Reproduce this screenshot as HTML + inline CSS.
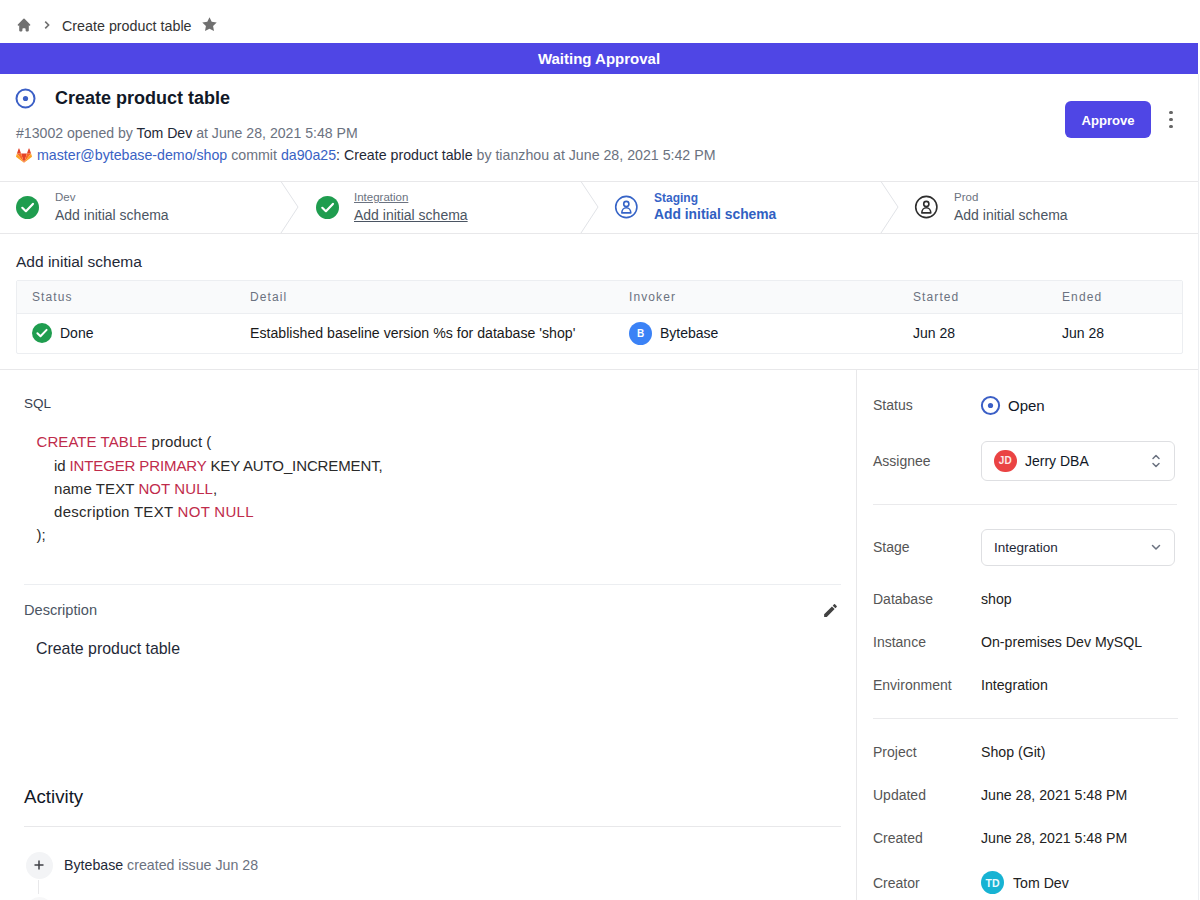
<!DOCTYPE html>
<html><head><meta charset="utf-8">
<style>
*{box-sizing:border-box;margin:0;padding:0}
html,body{width:1200px;height:900px;overflow:hidden;background:#fff}
body{position:relative;font-family:"Liberation Sans",sans-serif;color:#1f2937}
.t{position:absolute;line-height:1;white-space:nowrap}
.abs{position:absolute}
.hl{position:absolute;height:1px;background:#e8e8ea}
.vl{position:absolute;width:1px;background:#e8e8ea}
.b{font-weight:bold}
.g{color:#6b7280}
.lbl{font-size:14px;color:#555}
.val{font-size:14.15px;color:#222}
.th{font-size:12px;color:#6b7280;letter-spacing:1.1px}
.red{color:#bf2b4b}
</style></head>
<body>

<!-- breadcrumb -->
<svg class="abs" style="left:16px;top:17px" width="16" height="16" viewBox="0 0 20 20"><path fill="#707070" d="M10.7 2.3a1 1 0 0 0-1.4 0l-7 7a1 1 0 0 0 1.4 1.4l.3-.3V17a1 1 0 0 0 1 1h2a1 1 0 0 0 1-1v-2a1 1 0 0 1 1-1h2a1 1 0 0 1 1 1v2a1 1 0 0 0 1 1h2a1 1 0 0 0 1-1v-6.6l.3.3a1 1 0 0 0 1.4-1.4l-7-7z"/></svg>
<svg class="abs" style="left:41.5px;top:19px" width="10" height="12" viewBox="0 0 10 12"><path d="M3.2 2.6l3.4 3.4-3.4 3.4" fill="none" stroke="#707070" stroke-width="1.6"/></svg>
<div class="t" style="left:62px;top:calc(31px - 0.8465em);font-size:14.3px;color:#333">Create product table</div>
<svg class="abs" style="left:201px;top:16px" width="17" height="17" viewBox="0 0 20 20"><path fill="#707070" d="M10 1.5l2.6 5.4 5.9.8-4.3 4.1 1.1 5.9L10 14.9l-5.3 2.8 1.1-5.9L1.5 7.7l5.9-.8z"/></svg>

<!-- banner -->
<div class="abs" style="left:0;top:43px;width:1198px;height:31px;background:#4f46e5"></div>
<div class="t b" style="left:0;width:1198px;text-align:center;top:calc(64px - 0.8465em);font-size:15px;color:#fff">Waiting Approval</div>
<div class="vl" style="left:1198px;top:74px;height:826px;background:#eceef1"></div>

<!-- title -->
<svg class="abs" style="left:15px;top:88px" width="21" height="21" viewBox="0 0 21 21"><circle cx="10.5" cy="10.5" r="9" fill="none" stroke="#3b5fc6" stroke-width="2"/><circle cx="10.5" cy="10.5" r="2.6" fill="#3b5fc6"/></svg>
<div class="t b" style="left:55px;top:calc(104px - 0.8465em);font-size:18px;color:#111827">Create product table</div>
<div class="t g" style="left:16px;top:calc(137.5px - 0.8465em);font-size:14.12px"><span>#13002 opened by </span><span style="color:#1f2937">Tom Dev</span> at June 28, 2021 5:48 PM</div>
<svg class="abs" style="left:15.5px;top:148px" width="16" height="15.5" viewBox="0 0 24 22"><path fill="#e24329" d="M12 21.6l4.4-13.8H7.6z"/><path fill="#fc6d26" d="M12 21.6L7.6 7.8H1.4z"/><path fill="#fca326" d="M1.4 7.8L.1 11.9a.9.9 0 0 0 .3 1L12 21.6z"/><path fill="#e24329" d="M1.4 7.8h6.2L4.9.3a.5.5 0 0 0-.9 0z"/><path fill="#fc6d26" d="M12 21.6l4.4-13.8h6.2z"/><path fill="#fca326" d="M22.6 7.8l1.3 4.1a.9.9 0 0 1-.3 1L12 21.6z"/><path fill="#e24329" d="M22.6 7.8h-6.2L19.1.3a.5.5 0 0 1 .9 0z"/></svg>
<div class="t g" style="left:37px;top:calc(160.5px - 0.8465em);font-size:14.2px"><span style="color:#3962c4">master@bytebase-demo/shop</span> commit <span style="color:#3962c4">da90a25</span><span style="color:#1f2937">: Create product table</span> by tianzhou at June 28, 2021 5:42 PM</div>

<!-- approve -->
<div class="abs" style="left:1065px;top:101px;width:86px;height:37px;background:#4f46e5;border-radius:6px"></div>
<div class="t b" style="left:1065px;width:86px;text-align:center;top:calc(125px - 0.8465em);font-size:13.1px;color:#fff">Approve</div>
<div class="abs" style="left:1169px;top:110.5px;width:3.8px;height:3.8px;border-radius:2px;background:#666"></div>
<div class="abs" style="left:1169px;top:117.5px;width:3.8px;height:3.8px;border-radius:2px;background:#666"></div>
<div class="abs" style="left:1169px;top:124.5px;width:3.8px;height:3.8px;border-radius:2px;background:#666"></div>

<!-- stepper -->
<div class="hl" style="left:0;top:181px;width:1198px"></div>
<div class="hl" style="left:0;top:233px;width:1198px"></div>
<svg class="abs" style="left:0;top:181px" width="1198" height="53"><g fill="none" stroke="#e1e3e7" stroke-width="1"><path d="M281 0.5L298 26L281 52"/><path d="M581 0.5L598 26L581 52"/><path d="M881 0.5L898 26L881 52"/></g></svg>

<svg class="abs" style="left:16px;top:196px" width="23" height="23" viewBox="0 0 23 23"><circle cx="11.5" cy="11.5" r="11.5" fill="#1f9d4f"/><path d="M6.3 11.8l3.6 3.4 7-7.3" fill="none" stroke="#fff" stroke-width="2.2" stroke-linecap="round" stroke-linejoin="round"/></svg>
<div class="t" style="left:55px;top:calc(202px - 0.8465em);font-size:11.5px;color:#6b7280">Dev</div>
<div class="t" style="left:55px;top:calc(220px - 0.8465em);font-size:14px;color:#4b5563">Add initial schema</div>

<svg class="abs" style="left:316px;top:196px" width="23" height="23" viewBox="0 0 23 23"><circle cx="11.5" cy="11.5" r="11.5" fill="#1f9d4f"/><path d="M6.3 11.8l3.6 3.4 7-7.3" fill="none" stroke="#fff" stroke-width="2.2" stroke-linecap="round" stroke-linejoin="round"/></svg>
<div class="t" style="left:354px;top:calc(202px - 0.8465em);font-size:11.5px;color:#6b7280;text-decoration:underline">Integration</div>
<div class="t" style="left:354px;top:calc(220px - 0.8465em);font-size:14px;color:#4b5563;text-decoration:underline">Add initial schema</div>

<svg class="abs" style="left:614px;top:195px" width="25" height="25" viewBox="0 0 25 25"><g fill="none" stroke="#3664c7" stroke-width="1.6"><circle cx="12.3" cy="12" r="10.6"/><circle cx="12.3" cy="9" r="2.6"/><path d="M7.8 17.9a4.5 5.1 0 0 1 9 0z" stroke-linejoin="round"/></g></svg>
<div class="t b" style="left:654px;top:calc(202px - 0.8465em);font-size:12px;color:#3664c7">Staging</div>
<div class="t b" style="left:654px;top:calc(220px - 0.8465em);font-size:13.85px;color:#3060c2">Add initial schema</div>

<svg class="abs" style="left:914px;top:195px" width="25" height="25" viewBox="0 0 25 25"><g fill="none" stroke="#2e2e2e" stroke-width="1.6"><circle cx="12.3" cy="12" r="10.6"/><circle cx="12.3" cy="9" r="2.6"/><path d="M7.8 17.9a4.5 5.1 0 0 1 9 0z" stroke-linejoin="round"/></g></svg>
<div class="t" style="left:954px;top:calc(202px - 0.8465em);font-size:11.5px;color:#6b7280">Prod</div>
<div class="t" style="left:954px;top:calc(220px - 0.8465em);font-size:14px;color:#4b5563">Add initial schema</div>

<!-- task table -->
<div class="t" style="left:16px;top:calc(266.7px - 0.8465em);font-size:15.5px;color:#1f2937">Add initial schema</div>
<div class="abs" style="left:16px;top:280px;width:1167px;height:74px;border:1px solid #eceef1;border-radius:2px"></div>
<div class="abs" style="left:17px;top:281px;width:1165px;height:32px;background:#f9fafb"></div>
<div class="hl" style="left:17px;top:313px;width:1165px;background:#eceef1"></div>
<div class="t th" style="left:32px;top:calc(300.7px - 0.8465em)">Status</div>
<div class="t th" style="left:250px;top:calc(300.7px - 0.8465em)">Detail</div>
<div class="t th" style="left:629px;top:calc(300.7px - 0.8465em)">Invoker</div>
<div class="t th" style="left:913px;top:calc(300.7px - 0.8465em)">Started</div>
<div class="t th" style="left:1062px;top:calc(300.7px - 0.8465em)">Ended</div>

<svg class="abs" style="left:32px;top:323px" width="20" height="20" viewBox="0 0 20 20"><circle cx="10" cy="10" r="10" fill="#1f9d4f"/><path d="M5.4 10.3l3.1 3 6.1-6.4" fill="none" stroke="#fff" stroke-width="2" stroke-linecap="round" stroke-linejoin="round"/></svg>
<div class="t" style="left:60px;top:calc(338px - 0.8465em);font-size:14px;color:#111827">Done</div>
<div class="t" style="left:250px;top:calc(338px - 0.8465em);font-size:14.15px;color:#1a1a1a">Established baseline version %s for database 'shop'</div>
<div class="abs" style="left:629px;top:322px;width:23px;height:23px;border-radius:50%;background:#3b82f6"></div>
<div class="t b" style="left:629px;width:23px;text-align:center;top:calc(337px - 0.8465em);font-size:10px;color:#fff">B</div>
<div class="t" style="left:660px;top:calc(338px - 0.8465em);font-size:14px;color:#111827">Bytebase</div>
<div class="t" style="left:913px;top:calc(338px - 0.8465em);font-size:14px;color:#111827">Jun 28</div>
<div class="t" style="left:1062px;top:calc(338px - 0.8465em);font-size:14px;color:#111827">Jun 28</div>

<div class="hl" style="left:0;top:369px;width:1198px"></div>

<!-- main left -->
<div class="t" style="left:24px;top:calc(408.3px - 0.8465em);font-size:13.5px;color:#374151">SQL</div>
<div class="t" style="left:36.5px;top:calc(446.9px - 0.8465em);font-size:15px;letter-spacing:0.07px;color:#2a2a2a"><span class="red">CREATE TABLE</span> product (</div>
<div class="t" style="left:54px;top:calc(470.2px - 0.8465em);font-size:15px;letter-spacing:-0.12px;color:#2a2a2a">id <span class="red">INTEGER PRIMARY</span> KEY AUTO_INCREMENT,</div>
<div class="t" style="left:54px;top:calc(493.5px - 0.8465em);font-size:15px;letter-spacing:0.08px;color:#2a2a2a">name TEXT <span class="red">NOT NULL</span>,</div>
<div class="t" style="left:54px;top:calc(516.7px - 0.8465em);font-size:15px;letter-spacing:0.29px;color:#2a2a2a">description TEXT <span class="red">NOT NULL</span></div>
<div class="t" style="left:36.5px;top:calc(539.5px - 0.8465em);font-size:15px;color:#2a2a2a">);</div>

<div class="hl" style="left:24px;top:584px;width:817px;background:#eceef1"></div>
<div class="t" style="left:24px;top:calc(615.8px - 0.8465em);font-size:14.6px;color:#4b5563">Description</div>
<svg class="abs" style="left:822px;top:602px" width="17" height="17" viewBox="0 0 24 24"><path fill="#424242" d="M3 17.25V21h3.75L17.81 9.94l-3.75-3.75L3 17.25zM20.71 7.04a1 1 0 0 0 0-1.41l-2.34-2.34a1 1 0 0 0-1.41 0l-1.83 1.83 3.75 3.75 1.83-1.83z"/></svg>
<div class="t" style="left:36px;top:calc(654.5px - 0.8465em);font-size:15.9px;color:#1f2937">Create product table</div>

<div class="t" style="left:24px;top:calc(803.4px - 0.8465em);font-size:18.7px;color:#111827">Activity</div>
<div class="hl" style="left:24px;top:826px;width:817px"></div>
<div class="abs" style="left:25.5px;top:851.5px;width:27px;height:27px;border-radius:50%;background:#f3f4f6"></div>
<div class="abs" style="left:25.5px;top:897px;width:27px;height:27px;border-radius:50%;background:#f7f7f8"></div>
<svg class="abs" style="left:33px;top:859px" width="12" height="12" viewBox="0 0 12 12"><path d="M6 1.5v9M1.5 6h9" stroke="#3f3f46" stroke-width="1.5"/></svg>
<div class="vl" style="left:38px;top:880px;height:14px"></div>
<div class="t" style="left:64px;top:calc(870.2px - 0.8465em);font-size:14.2px;color:#6b7280"><span class="b" style="color:#1f2937;font-weight:normal">Bytebase</span> created issue Jun 28</div>

<!-- sidebar -->
<div class="vl" style="left:856px;top:369px;height:531px"></div>
<div class="t lbl" style="left:873px;top:calc(410px - 0.8465em)">Status</div>
<svg class="abs" style="left:980px;top:395px" width="21" height="21" viewBox="0 0 21 21"><circle cx="10.5" cy="10.5" r="8.6" fill="none" stroke="#3b5fc6" stroke-width="2"/><circle cx="10.5" cy="10.5" r="2.6" fill="#3b5fc6"/></svg>
<div class="t" style="left:1008px;top:calc(410.5px - 0.8465em);font-size:15px;color:#111827">Open</div>

<div class="t lbl" style="left:873px;top:calc(466px - 0.8465em)">Assignee</div>
<div class="abs" style="left:981px;top:441px;width:194px;height:40px;border:1px solid #dedfe2;border-radius:6px"></div>
<div class="abs" style="left:994px;top:449.5px;width:22.5px;height:22.5px;border-radius:50%;background:#ea4343"></div>
<div class="t b" style="left:994px;width:22.5px;text-align:center;top:calc(464.8px - 0.8465em);font-size:10px;color:#fde8e8">JD</div>
<div class="t" style="left:1025px;top:calc(466px - 0.8465em);font-size:14px;color:#111827">Jerry DBA</div>
<svg class="abs" style="left:1150.3px;top:452px" width="12" height="18" viewBox="0 0 12 18"><path d="M3 6.5l3-3 3 3M3 11.5l3 3 3-3" fill="none" stroke="#6b7280" stroke-width="1.5" stroke-linecap="round" stroke-linejoin="round"/></svg>

<div class="hl" style="left:873px;top:503.5px;width:304px;background:#eaeaec"></div>

<div class="t lbl" style="left:873px;top:calc(552px - 0.8465em)">Stage</div>
<div class="abs" style="left:981px;top:529px;width:194px;height:37px;border:1px solid #dedfe2;border-radius:6px"></div>
<div class="t" style="left:994px;top:calc(552px - 0.8465em);font-size:13.5px;color:#1f2937">Integration</div>
<svg class="abs" style="left:1150px;top:541px" width="12" height="12" viewBox="0 0 12 12"><path d="M2.5 4.5l3.5 3.5 3.5-3.5" fill="none" stroke="#6b7280" stroke-width="1.5" stroke-linecap="round" stroke-linejoin="round"/></svg>

<div class="t lbl" style="left:873px;top:calc(604px - 0.8465em)">Database</div>
<div class="t val" style="left:981px;top:calc(604px - 0.8465em)">shop</div>
<div class="t lbl" style="left:873px;top:calc(647px - 0.8465em)">Instance</div>
<div class="t val" style="left:981px;top:calc(647px - 0.8465em)">On-premises Dev MySQL</div>
<div class="t lbl" style="left:873px;top:calc(690px - 0.8465em)">Environment</div>
<div class="t val" style="left:981px;top:calc(690px - 0.8465em)">Integration</div>

<div class="hl" style="left:873px;top:718px;width:305px;background:#eaeaec"></div>

<div class="t lbl" style="left:873px;top:calc(757px - 0.8465em)">Project</div>
<div class="t val" style="left:981px;top:calc(757px - 0.8465em)">Shop (Git)</div>
<div class="t lbl" style="left:873px;top:calc(800px - 0.8465em)">Updated</div>
<div class="t val" style="left:981px;top:calc(800px - 0.8465em)">June 28, 2021 5:48 PM</div>
<div class="t lbl" style="left:873px;top:calc(843px - 0.8465em)">Created</div>
<div class="t val" style="left:981px;top:calc(843px - 0.8465em)">June 28, 2021 5:48 PM</div>
<div class="t lbl" style="left:873px;top:calc(887.5px - 0.8465em)">Creator</div>
<div class="abs" style="left:981px;top:871px;width:23px;height:23px;border-radius:50%;background:#17b3d3"></div>
<div class="t b" style="left:981px;width:23px;text-align:center;top:calc(886.5px - 0.8465em);font-size:10.5px;color:#eafafd">TD</div>
<div class="t val" style="left:1013px;top:calc(887.5px - 0.8465em)">Tom Dev</div>

</body></html>
